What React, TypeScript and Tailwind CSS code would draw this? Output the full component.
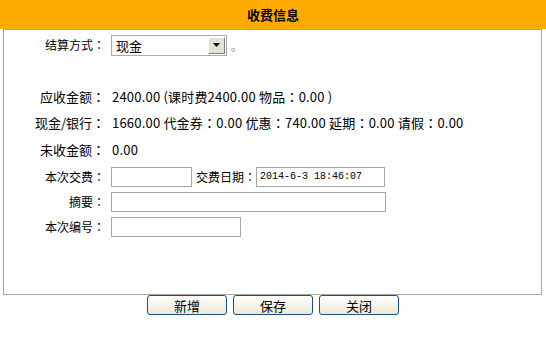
import React from "react";

const label = "w-[102px] shrink-0 text-right text-[12px] pr-[1px]";
const input = "h-[20px] border border-[#a5a5a5] bg-white";

// full-width colon centred in its cell, as in the original
function T({ s }: { s: string }) {
	const parts = s.split("：");
	return (
		<>
			{parts.map((p, i) => (
				<React.Fragment key={i}>
					{p}
					{i < parts.length - 1 && (
						<span className="font-['Noto_Sans_CJK_JP',sans-serif]">：</span>
					)}
				</React.Fragment>
			))}
		</>
	);
}

function Row({ h, children }: { h: string; children: React.ReactNode }) {
	return <div className={`flex items-center ${h}`}>{children}</div>;
}

export default function App() {
	return (
		<div className="w-[546px] h-[348px] bg-white text-black font-['Noto_Sans_CJK_SC',sans-serif] leading-none">
			<div className="h-[29px] bg-[#ffaa00] flex items-center justify-center text-[13px] font-bold">
				收费信息
			</div>

			<div className="ml-[3px] w-[539px] h-[266px] border border-[#aca899]">
				<Row h="h-[30px]">
					<div className={label}>
						<T s="结算方式：" />
					</div>
					<div className="ml-[5px] w-[116px] h-[21px] border border-[#a5acb5] flex items-center pl-[4px] pr-[1px] text-[13px]">
						<span className="flex-1">现金</span>
						<span className="w-[17px] h-[17px] bg-[#e4e1d8] border border-t-white border-l-white border-r-[#808080] border-b-[#808080] flex items-center justify-center">
							<svg width="7" height="4" viewBox="0 0 7 4">
								<path d="M0 0h7L3.5 4z" fill="#000" />
							</svg>
						</span>
					</div>
					<span className="ml-[4px] mt-[3px] text-[11px] text-[#777]">。</span>
				</Row>
				<div className="h-[23px]" />
				<Row h="h-[26px]">
					<div className={`${label} text-[13px]`}>
						<T s="应收金额：" />
					</div>
					<div className="ml-[6px] text-[13px] tracking-[0.2px]">
						<T s="2400.00 (课时费2400.00 物品：0.00 )" />
					</div>
				</Row>
				<Row h="h-[27px]">
					<div className={`${label} text-[13px]`}>
						<T s="现金/银行：" />
					</div>
					<div className="ml-[6px] text-[13px] tracking-[0.2px]">
						<T s="1660.00 代金券：0.00 优惠：740.00 延期：0.00 请假：0.00" />
					</div>
				</Row>
				<Row h="h-[27px]">
					<div className={`${label} text-[13px]`}>
						<T s="未收金额：" />
					</div>
					<div className="ml-[6px] text-[13px] tracking-[0.2px]">0.00</div>
				</Row>
				<Row h="h-[27px]">
					<div className={label}>
						<T s="本次交费：" />
					</div>
					<div className={`ml-[5px] w-[81px] ${input}`} />
					<div className="ml-[4px] text-[12px]">
						<T s="交费日期：" />
					</div>
					<div
						className={`w-[129px] ${input} flex items-center pl-[3px] text-[10px] font-['Liberation_Mono',monospace]`}
					>
						2014-6-3 18:46:07
					</div>
				</Row>
				<Row h="h-[23px]">
					<div className={label}>
						<T s="摘要：" />
					</div>
					<div className={`ml-[5px] w-[275px] ${input}`} />
				</Row>
				<Row h="h-[28px]">
					<div className={label}>
						<T s="本次编号：" />
					</div>
					<div className={`ml-[5px] w-[130px] ${input}`} />
				</Row>
			</div>

			<div className="flex justify-center gap-[6px]">
				{["新增", "保存", "关闭"].map((t) => (
					<button
						key={t}
						className="w-[80px] h-[20px] border border-[#1c5180] rounded-[3px] bg-linear-to-b from-white to-[#ece9d8] text-[13px] flex items-center justify-center"
					>
						{t}
					</button>
				))}
			</div>
		</div>
	);
}
